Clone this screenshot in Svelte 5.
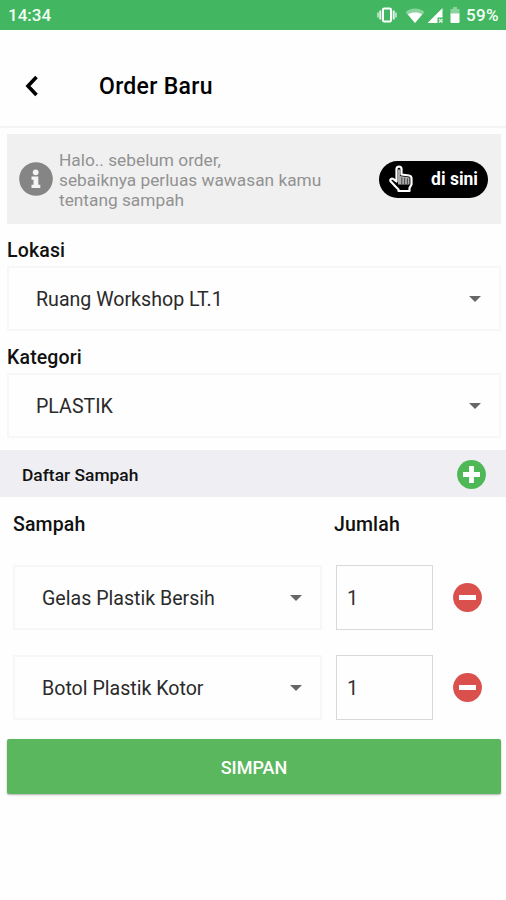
<script lang="ts">
  let location = "Ruang Workshop LT.1";
  let category = "PLASTIK";

  let items = [
    { name: "Gelas Plastik Bersih", qty: 1 },
    { name: "Botol Plastik Kotor", qty: 1 },
  ];

  function addItem() {
    items = [...items, { name: "", qty: 1 }];
  }

  function removeItem(index: number) {
    items = items.filter((_, i) => i !== index);
  }
</script>

<div class="screen">
  <div class="status-bar">
    <span class="time">14:34</span>
    <div class="status-icons">
      <svg class="vibrate" viewBox="0 0 20 16" width="20" height="16">
        <rect x="6" y="1.5" width="8" height="13" rx="1.2" fill="none" stroke="#fff" stroke-width="2" />
        <path d="M3.3 3.5v9M16.7 3.5v9" stroke="#e4f6e9" stroke-width="2" />
        <path d="M1 5.5v5M19 5.5v5" stroke="#b9e4c6" stroke-width="1.8" />
      </svg>
      <svg class="wifi" viewBox="0 0 20 15" width="20" height="15">
        <path d="M.5 4.2C6-.6 14-.6 19.5 4.2L10 15z" fill="#8dd3a0" />
        <path d="M2.8 6.2C7 3.8 13 3.8 17.2 6.2L10 15z" fill="#fff" />
      </svg>
      <svg class="signal" viewBox="0 0 16 15" width="16" height="15">
        <path d="M15.5 0v9.5h-5V15H.5z" fill="#fff" />
        <path d="M12 11l3.5 3.5M15.5 11L12 14.5" stroke="#d2efda" stroke-width="1.6" />
      </svg>
      <svg class="battery" viewBox="0 0 10 16" width="10" height="16">
        <path d="M3 0h4v2h2.5v5h-9V2H3z" fill="#8dd3a0" />
        <path d="M.5 6.5h9V15a1 1 0 0 1-1 1h-7a1 1 0 0 1-1-1z" fill="#fff" />
      </svg>
      <span class="percent">59%</span>
    </div>
  </div>

  <header>
    <button class="back" aria-label="Kembali">
      <svg viewBox="0 0 14 22" width="14" height="22">
        <path d="M11.5 2L3 11l8.5 9" fill="none" stroke="#000" stroke-width="3.6" />
      </svg>
    </button>
    <h1>Order Baru</h1>
  </header>

  <div class="notice">
    <svg class="info" viewBox="0 0 34 34" width="34" height="34">
      <circle cx="17" cy="17" r="16.8" fill="#858585" />
      <circle cx="16.7" cy="10.3" r="2.9" fill="#f4f4f4" />
      <path d="M12.5 14.5h6.8v8.2h2V26h-8.800v-3.300h2v-4.900h-2z" fill="#f4f4f4" />
    </svg>
    <p>Halo.. sebelum order,<br />sebaiknya perluas wawasan kamu<br />tentang sampah</p>
    <button class="here">
      <svg viewBox="0 0 24 28" width="24" height="28">
        <path d="M7.5 16.5V4c0-3.2 5-3.2 5 0v5.500l7.500 1c1.800.3 2.500 1.300 2.500 3v6l-2 3.500v3H9.500V24.500L6.500 21.500l-4.700-5c-1.400-2 .8-3.800 2.700-2.300z" fill="#000" stroke="#fff" stroke-width="2.2" stroke-linejoin="round" />
        <path d="M9 4.500h2V11l9.500 1.500v7H9z" fill="#aaa" />
        <path d="M12.800 12.500v6.500M15.600 13v6M18.400 13.500V19" stroke="#444" stroke-width="1" />
      </svg>
      <span>di sini</span>
    </button>
  </div>

  <label class="title location-title" for="location">Lokasi</label>
  <button class="select" id="location">
    <span>{location}</span>
    <svg class="arrow" viewBox="0 0 12 6" width="12" height="6"><path d="M0 0h12L6 6z" /></svg>
  </button>

  <label class="title category-title" for="category">Kategori</label>
  <button class="select category" id="category">
    <span>{category}</span>
    <svg class="arrow" viewBox="0 0 12 6" width="12" height="6"><path d="M0 0h12L6 6z" /></svg>
  </button>

  <div class="list-bar">
    <h2>Daftar Sampah</h2>
    <button class="round" aria-label="Tambah" on:click={addItem}>
      <svg viewBox="0 0 29 29" width="29" height="29">
        <circle cx="14.5" cy="14.5" r="14.4" fill="#4fb856" />
        <path d="M14.5 6v17M6 14.5h17" stroke="#fff" stroke-width="4.8" />
      </svg>
    </button>
  </div>

  <div class="columns">
    <span class="name">Sampah</span>
    <span class="amount">Jumlah</span>
  </div>

  <div class="items">
    {#each items as item, i}
      <div class="item">
        <button class="select">
          <span>{item.name}</span>
          <svg class="arrow" viewBox="0 0 12 6" width="12" height="6"><path d="M0 0h12L6 6z" /></svg>
        </button>
        <input type="text" inputmode="numeric" bind:value={item.qty} />
        <button class="round" aria-label="Hapus" on:click={() => removeItem(i)}>
          <svg viewBox="0 0 29 29" width="29" height="29">
            <circle cx="14.5" cy="14.5" r="14.4" fill="#d9504c" />
            <path d="M6 14.5h17" stroke="#fff" stroke-width="5" />
          </svg>
        </button>
      </div>
    {/each}
  </div>

  <button class="save">SIMPAN</button>
</div>

<style>
  :global(body) {
    background: #fefefe;
  }

  .screen {
    width: 506px;
    height: 900px;
    display: flex;
    flex-direction: column;
    overflow: hidden;
    background: #fefefe;
    font-family: Roboto, sans-serif;
    color: #111;
  }

  button {
    padding: 0;
    border: none;
    background: none;
    font-family: inherit;
    color: inherit;
    cursor: pointer;
  }

  svg {
    display: block;
    flex: none;
  }

  .status-bar {
    height: 30px;
    flex: none;
    box-sizing: border-box;
    padding: 0 7px 0 8px;
    display: flex;
    align-items: center;
    justify-content: space-between;
    background: #42b660;
    color: #f4fff6;
    font-size: 17px;
    font-weight: 500;
  }

  .percent {
    letter-spacing: 0.4px;
  }

  .status-icons {
    display: flex;
    align-items: center;
  }

  .wifi {
    margin-left: 8px;
  }

  .signal {
    margin-left: 2px;
  }

  .battery {
    margin: 0 6px 0 7px;
  }

  header {
    height: 98px;
    flex: none;
    box-sizing: border-box;
    padding: 16px 0 0 25px;
    display: flex;
    align-items: center;
    border-bottom: 2px solid #f5f5f5;
  }

  h1 {
    margin: 0 0 0 60px;
    font-size: 23px;
    font-weight: 500;
    letter-spacing: 0.3px;
    color: #000;
  }

  .notice {
    height: 90px;
    flex: none;
    box-sizing: border-box;
    margin: 6px 5px 0 7px;
    padding: 0 13px 0 12px;
    display: flex;
    align-items: center;
    background: #f0f0f0;
  }

  .notice p {
    margin: 2px 0 0 6px;
    flex: 1;
    font-size: 17.3px;
    line-height: 20px;
    color: #929292;
    white-space: nowrap;
  }

  .here {
    width: 109px;
    height: 37px;
    padding: 0 10px;
    display: flex;
    align-items: center;
    justify-content: space-between;
    border-radius: 19px;
    background: #000;
    color: #fff;
    font-size: 17.5px;
    font-weight: 700;
  }

  .title {
    height: 24px;
    flex: none;
    margin: 15px 0 0 7px;
    font-size: 19.5px;
    font-weight: 500;
    line-height: 24px;
    letter-spacing: 0.15px;
  }

  .select {
    height: 65px;
    flex: none;
    box-sizing: border-box;
    margin: 3px 5px 0 7px;
    padding: 1px 18px 0 27px;
    display: flex;
    align-items: center;
    justify-content: space-between;
    border: 2px solid #f7f7f7;
    font-size: 19.6px;
    color: #2a2a2a;
  }

  .category-title {
    margin-top: 15px;
  }

  .arrow {
    fill: #666;
  }

  .list-bar {
    height: 47px;
    flex: none;
    box-sizing: border-box;
    margin-top: 12px;
    padding: 2px 20px 0 22px;
    display: flex;
    align-items: center;
    justify-content: space-between;
    background: #eeeef3;
  }

  h2 {
    margin: 0;
    font-size: 17.4px;
    font-weight: 500;
  }

  .columns {
    height: 68px;
    flex: none;
    box-sizing: border-box;
    padding: 16px 0 0 13px;
    display: flex;
    font-size: 19.5px;
    font-weight: 500;
    line-height: 24px;
    letter-spacing: 0.15px;
  }

  .name {
    width: 321px;
  }

  .items {
    display: flex;
    flex-direction: column;
    gap: 25px;
  }

  .item {
    padding: 0 24px 0 13px;
    display: flex;
    align-items: center;
  }

  .item .select {
    width: 309px;
    margin: 0;
  }

  .item input {
    width: 97px;
    height: 65px;
    box-sizing: border-box;
    margin: 0 20px 0 14px;
    padding: 0 10px;
    border: 1px solid #d8d8d8;
    background: #fefefe;
    font-family: inherit;
    font-size: 20px;
    color: #333;
    outline: none;
  }

  .save {
    height: 55px;
    flex: none;
    margin: 19px 5px 0 7px;
    padding-top: 1px;
    border-radius: 2px;
    background: #5bb75d;
    box-shadow: 0 1px 2px rgba(0, 0, 0, 0.3);
    color: #fff;
    font-size: 18px;
    font-weight: 500;
  }
</style>
